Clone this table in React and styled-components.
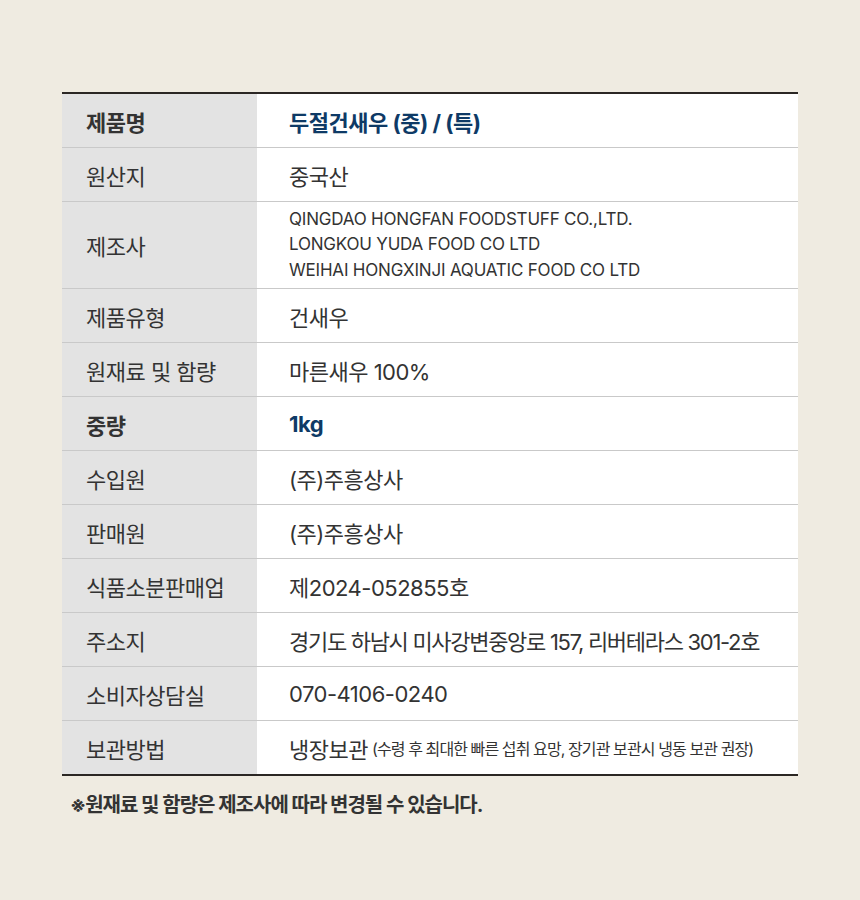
import React from 'react';
import styled, { createGlobalStyle } from 'styled-components';

const GlobalStyle = createGlobalStyle`
  html, body {
    margin: 0;
    padding: 0;
    background: #efebe1;
  }
  body {
    font-family: Inter, "Noto Sans CJK KR", sans-serif;
    color: #333;
  }
`;

const Page = styled.div`
  width: 860px;
  height: 900px;
  box-sizing: border-box;
  padding: 92px 62px 0;
  background: #efebe1;
`;

const Table = styled.div`
  border-top: 2px solid #2b2724;
  border-bottom: 2px solid #2b2724;
  background: #fff;
`;

const Row = styled.div`
  display: grid;
  grid-template-columns: 195px 1fr;
  min-height: ${props => props.tall ? '86px' : '53px'};
  border-bottom: 1px solid #c9c9c9;

  &:last-child {
    border-bottom: none;
  }
`;

const Label = styled.div`
  display: flex;
  align-items: center;
  padding-left: 24px;
  background: #e3e3e3;
  font-size: 22px;
  letter-spacing: -0.5px;
  font-weight: ${props => props.strong ? 700 : 400};
  color: #333;
`;

const Value = styled.div`
  display: flex;
  align-items: center;
  padding-left: 32px;
  font-size: 22px;
  letter-spacing: ${props => props.tight ? '-1.3px' : '-0.5px'};
  font-weight: ${props => props.strong ? 700 : 400};
  color: ${props => props.strong ? '#0e3a66' : '#333'};
`;

const Lines = styled.div`
  font-size: 17px;
  line-height: 25.5px;
  letter-spacing: -0.2px;
`;

const Small = styled.span`
  font-size: 16px;
  letter-spacing: -0.9px;
  margin-left: 4px;
`;

const Note = styled.p`
  margin: 13px 0 0 8px;
  font-size: 20px;
  font-weight: 700;
  letter-spacing: -1px;
  color: #333;
`;

const rows = [
  { label: '제품명', value: '두절건새우 (중) / (특)', strong: true },
  { label: '원산지', value: '중국산' },
  {
    label: '제조사',
    lines: [
      'QINGDAO HONGFAN FOODSTUFF CO.,LTD.',
      'LONGKOU YUDA FOOD CO LTD',
      'WEIHAI HONGXINJI AQUATIC FOOD CO LTD',
    ],
  },
  { label: '제품유형', value: '건새우' },
  { label: '원재료 및 함량', value: '마른새우 100%' },
  { label: '중량', value: '1kg', strong: true },
  { label: '수입원', value: '(주)주흥상사' },
  { label: '판매원', value: '(주)주흥상사' },
  { label: '식품소분판매업', value: '제2024-052855호' },
  { label: '주소지', value: '경기도 하남시 미사강변중앙로 157, 리버테라스 301-2호', tight: true },
  { label: '소비자상담실', value: '070-4106-0240' },
  {
    label: '보관방법',
    value: '냉장보관',
    small: '(수령 후 최대한 빠른 섭취 요망, 장기관 보관시 냉동 보관 권장)',
  },
];

export default function App() {
  return (
    <>
      <GlobalStyle />
      <Page>
        <Table>
          {rows.map(row => (
            <Row key={row.label} tall={!!row.lines}>
              <Label strong={row.strong}>{row.label}</Label>
              <Value strong={row.strong} tight={row.tight}>
                {row.lines ? (
                  <Lines>
                    {row.lines.map(line => <div key={line}>{line}</div>)}
                  </Lines>
                ) : (
                  <>
                    {row.value}
                    {row.small && <Small>{row.small}</Small>}
                  </>
                )}
              </Value>
            </Row>
          ))}
        </Table>
        <Note>※원재료 및 함량은 제조사에 따라 변경될 수 있습니다.</Note>
      </Page>
    </>
  );
}
